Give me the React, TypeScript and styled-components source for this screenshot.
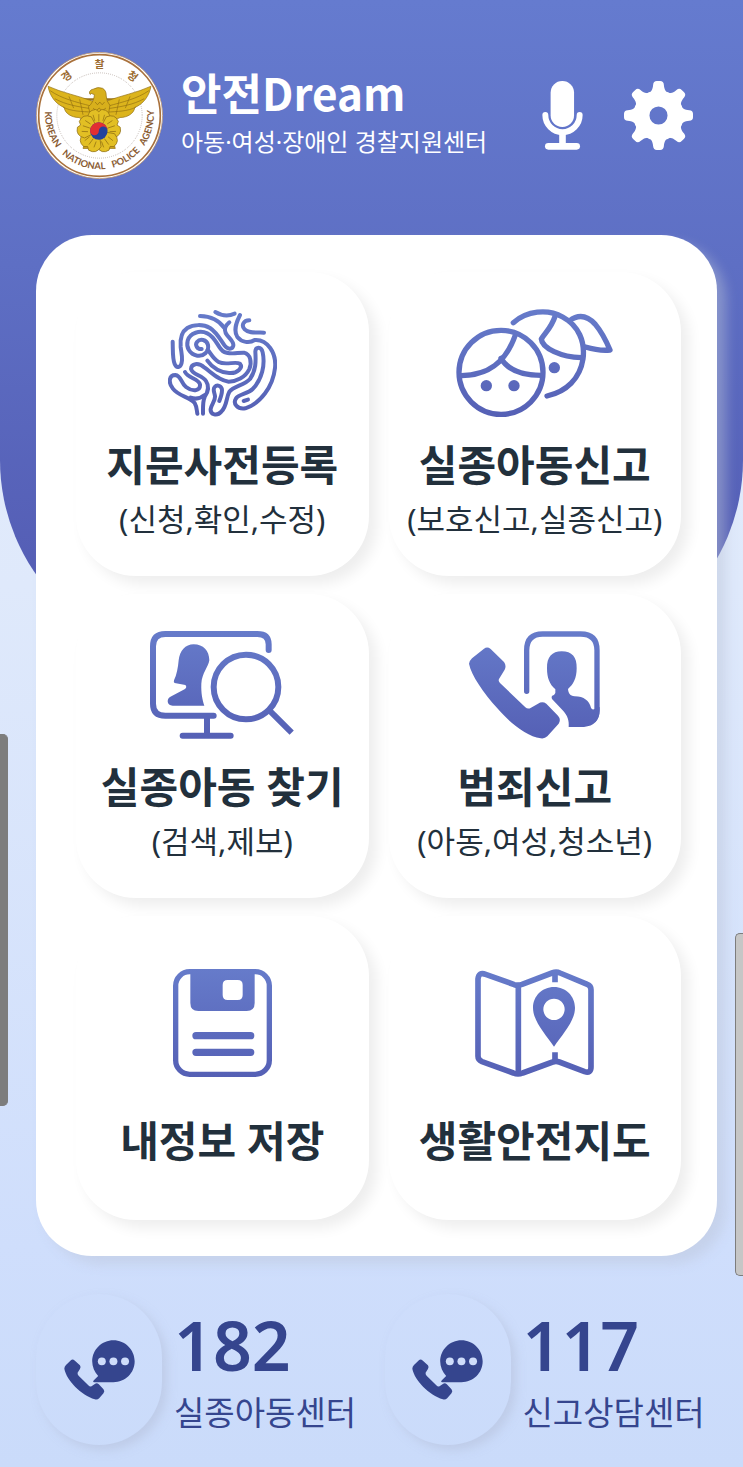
import { useId } from "react";
import type { ReactNode } from "react";
import styled, { createGlobalStyle } from "styled-components";

interface IconProps {
  box: string;
  width: number;
  children: ReactNode;
}

interface Menu {
  title: string;
  sub?: string;
  icon: ReactNode;
}

const GradientIcon = ({ box, width, children }: IconProps) => {
  const id = useId().replace(/[^a-zA-Z0-9]/g, "");
  const [, y, , h] = box.split(" ").map(Number);
  return (
    <TileSvg viewBox={box} $width={width} $paint={`url(#${id})`} aria-hidden="true">
      <defs>
        <linearGradient
          id={id}
          gradientUnits="userSpaceOnUse"
          x1="0"
          y1={y}
          x2="0"
          y2={y + h}
        >
          <stop offset="0" stopColor="#667bca" />
          <stop offset="1" stopColor="#5560b5" />
        </linearGradient>
      </defs>
      {children}
    </TileSvg>
  );
};

const FingerprintIcon = () => (
  <GradientIcon box="54 28 327 324" width={109}>
    <g className="line" strokeWidth="12">
      <path d="M196 37C214 48 236 50 254 42" />
      <path d="M150 49C180 50 206 60 222 84" />
      <path d="M238 68C226 78 221 88 227 100C234 114 252 124 250 138C247 151 232 149 224 138C210 118 200 98 180 85C160 73 130 74 112 85C92 98 90 120 92 142C94 158 97 168 96 182C94 205 80 207 74 193C67 176 69 152 68 126" />
      <path d="M270 46C262 62 248 90 262 112C275 128 298 132 314 121C352 118 380 160 375 205C369 262 330 312 286 326C262 330 249 312 257 298C265 283 292 284 308 268C336 240 346 195 338 158C334 140 317 140 316 156C318 186 318 212 300 238C282 258 252 258 238 276C228 294 232 318 214 336C202 350 180 346 182 328C184 314 196 304 195 290C194 278 187 270 194 262C202 253 216 260 216 272C216 284 212 294 208 304" />
      <path d="M298 62C280 62 273 78 284 89C297 102 320 98 342 99" />
      <path d="M155 148C142 150 134 136 141 127C150 116 170 119 174 136C178 156 160 171 142 168C118 164 108 142 113 123C120 99 150 91 172 101C196 112 202 140 218 154C238 168 262 158 282 159C302 164 306 188 298 208C286 234 258 246 236 246C206 242 186 220 164 204C144 187 124 192 123 208C128 226 156 226 168 244C180 262 172 280 164 292C158 304 159 322 159 342" />
      <path d="M172 183C188 206 214 221 240 220C262 221 280 204 270 192C256 184 226 198 206 187C190 178 184 164 173 150" />
      <path d="M105 217C114 236 146 236 150 254C152 276 126 276 108 262C92 250 94 228 76 226C56 226 55 250 68 266C86 290 120 292 134 310C141 322 140 332 142 342" />
      <path d="M164 286C152 296 138 300 122 294" />
      <path d="M281 304L294 300" />
    </g>
  </GradientIcon>
);

const ChildrenIcon = () => (
  <GradientIcon box="46 28 474 324" width={158}>
    <g className="line" strokeWidth="16">
      <circle cx="181" cy="218" r="126" />
      <path d="M62 228C142 227 195 190 224 106" />
      <path d="M181 176C200 208 238 227 302 227" />
      <path d="M218 69C258 34 320 26 366 52C414 78 434 126 427 178C418 236 378 276 319 289" />
      <path d="M344 48C332 84 318 94 302 118C304 146 362 172 422 174" />
      <path d="M386 64C412 44 438 46 464 74C484 98 496 122 508 151C480 154 458 149 434 142" />
    </g>
    <circle cx="137" cy="258" r="17" />
    <circle cx="220" cy="258" r="17" />
    <circle cx="341" cy="204" r="17" />
  </GradientIcon>
);

const SearchIcon = () => (
  <GradientIcon box="30 34 432 324" width={144}>
    <g className="line" strokeWidth="18">
      <path d="M386 91V74Q386 43 352 43H76Q39 43 39 80V252Q39 288 76 288H221" />
      <path d="M201 290V346M128 348H272" />
      <circle cx="318" cy="202" r="97" />
      <path d="M388 272L455 339" strokeLinecap="butt" />
    </g>
    <path d="M161 74C190 74 208 94 208 122C205 142 186 160 184 192C183 220 187 240 193 258H98C80 258 78 236 94 230L135 208Q142 202 136 196L104 190Q100 188 102 182C110 166 114 144 116 122C119 94 136 74 161 74Z" />
  </GradientIcon>
);

const CrimeIcon = () => (
  <GradientIcon box="27 34 393 324" width={131}>
    <path d="M72 87Q82 80 92 88L132 127Q140 138 134 150L117 178Q114 184 120 190L196 263Q204 270 213 264L234 252Q247 244 259 252L294 288Q304 299 296 312L262 350Q254 358 242 356C200 350 148 308 112 266C70 218 34 168 27 132Q28 124 36 116Z" />
    <path
      className="line"
      strokeWidth="16"
      d="M200 215V92Q200 43 248 43H362Q411 43 411 92V272Q411 290 402 300"
    />
    <path d="M305 95C336 95 351 112 350 146C350 176 340 194 324 208C325 220 330 229 344 230C372 230 388 244 393 264Q396 272 404 268L419 262V272Q417 318 372 322H326C328 302 322 288 310 274L276 238Q272 228 282 226Q288 220 286 209C268 194 261 174 261 146C260 112 276 95 305 95Z" />
  </GradientIcon>
);

const SaveIcon = () => (
  <GradientIcon box="38 42 297 324" width={99}>
    <rect className="line" strokeWidth="16" x="46" y="50" width="281" height="308" rx="42" />
    <path
      fillRule="evenodd"
      d="M90 50H283V144Q283 168 259 168H114Q90 168 90 144ZM202 75Q187 75 187 90V120Q187 135 202 135H232Q247 135 247 120V90Q247 75 232 75Z"
    />
    <path className="line" strokeWidth="22" d="M107 242H271M107 292H271" />
  </GradientIcon>
);

const MapIcon = () => (
  <GradientIcon box="45 42 357 324" width={119}>
    <g className="line" strokeWidth="17">
      <path d="M77 58L163 89Q174 92 186 88L276 54Q289 49 300 54L382 88Q393 92 393 104V336Q393 356 374 350L298 321Q288 317 278 321L188 354Q174 360 160 354L66 320Q54 315 54 304V72Q56 50 77 58Z" />
      <path d="M175 92V354" />
      <path strokeLinecap="butt" d="M285 54V82M285 292V318" />
    </g>
    <path
      fillRule="evenodd"
      d="M282 96C246 96 219 124 219 158C219 198 255 236 282 275C309 236 345 198 345 158C345 124 318 96 282 96ZM282 131A32 32 0 1 1 282 195A32 32 0 1 1 282 131Z"
    />
  </GradientIcon>
);

const feathers = [
  "M190 186C150 170 96 160 56 141C60 168 78 194 104 204C106 222 126 234 148 234C156 240 176 240 200 236Z",
  "M62 154C96 178 140 188 184 200",
  "M76 178C108 196 146 202 186 208",
  "M100 203C126 216 156 216 188 218",
  "M118 171L132 206M150 180L160 226",
];

const ringWords = [
  { word: "KOREAN", offset: "15%" },
  { word: "NATIONAL", offset: "41%" },
  { word: "POLICE", offset: "65%" },
  { word: "AGENCY", offset: "86%" },
];

const Emblem = () => (
  <EmblemSvg viewBox="20 39 378 378" role="img" aria-label="경찰청">
    <defs>
      <path id="emblem-arc" d="M52 186A162 162 0 1 0 366 186" />
    </defs>
    <circle cx="209" cy="228" r="188" fill="#fff" stroke="#b98a5c" strokeWidth="2" />
    <circle cx="209" cy="228" r="181" fill="#fff" stroke="#a9713c" strokeWidth="5" />
    <circle
      cx="209"
      cy="228"
      r="127"
      fill="none"
      stroke="#8c7a70"
      strokeWidth="2"
      strokeDasharray="2 4"
    />
    <g fill="#9a6a2e" fontSize="32" fontWeight="700" textAnchor="middle">
      <text transform="translate(118 120) rotate(-38)">경</text>
      <text x="209" y="87">찰</text>
      <text transform="translate(300 120) rotate(38)">청</text>
    </g>
    <g
      fill="#8a5c34"
      fontFamily="Lato, 'Liberation Sans', sans-serif"
      fontSize="28"
      fontWeight="700"
      textAnchor="middle"
    >
      {ringWords.map(({ word, offset }) => (
        <text key={word}>
          <textPath href="#emblem-arc" startOffset={offset}>
            {word}
          </textPath>
        </text>
      ))}
    </g>
    <path d="M130 180H290" stroke="#9a7420" strokeWidth="6" />
    {[false, true].map((flip) => (
      <g
        key={String(flip)}
        transform={flip ? "translate(418 0) scale(-1 1)" : undefined}
        stroke="#927012"
        strokeWidth="2"
      >
        {feathers.map((d, i) => (
          <path key={d} d={d} fill={i === 0 ? "#dcb41c" : "none"} />
        ))}
      </g>
    ))}
    <path
      d="M179 158Q182 150 192 149Q204 142 218 147Q230 154 229 170Q230 186 240 198L234 234H184L176 202Q192 188 194 166L184 162Q182 168 180 164Z"
      fill="#d8b01c"
      stroke="#8d6c12"
      strokeWidth="2"
    />
    <path
      d="M196 188L203 196L210 188L217 196L224 188M190 206L199 214L208 206L217 214L228 206"
      fill="none"
      stroke="#8d6c12"
      strokeWidth="2"
    />
    <path d="M172 284L160 326H256L244 284Z" fill="#cfa51a" stroke="#8d6c12" strokeWidth="2" />
    {[0, 72, 144, 216, 288].map((angle) => (
      <g key={angle} transform={`rotate(${angle} 207 274)`} stroke="#8d6c12" strokeWidth="2">
        <path
          d="M207 274L174 240Q172 212 198 210L207 217L216 210Q242 212 240 240Z"
          fill="#e2bf24"
        />
        <path d="M207 246V224M195 244L190 226M219 244L224 226" fill="none" />
      </g>
    ))}
    <circle cx="207" cy="274" r="26" fill="#23439c" />
    <path
      d="M181 274A26 26 0 0 1 233 274A13 13 0 0 0 207 274A13 13 0 0 1 181 274Z"
      fill="#e22f32"
    />
  </EmblemSvg>
);

const MicIcon = () => (
  <svg viewBox="38 32 124 209" width="41" height="69" fill="#fff" aria-hidden="true">
    <rect x="64" y="32" width="71" height="139" rx="35" />
    <path
      d="M48 135A52 52 0 0 0 152 135"
      fill="none"
      stroke="#fff"
      strokeWidth="18"
      strokeLinecap="round"
    />
    <rect x="90" y="188" width="20" height="40" />
    <rect x="47" y="220" width="106" height="20" rx="10" />
  </svg>
);

const GearIcon = () => (
  <svg viewBox="-103 -103 206 206" width="69" height="69" fill="#fff" aria-hidden="true">
    <circle r="51" fill="none" stroke="#fff" strokeWidth="48" />
    {[0, 45, 90, 135, 180, 225, 270, 315].map((angle) => (
      <path
        key={angle}
        transform={`rotate(${angle})`}
        d="M-36 -62C-22 -68 -17 -78 -16 -92Q-15 -103 -5 -103H5Q15 -103 16 -92C17 -78 22 -68 36 -62Z"
      />
    ))}
  </svg>
);

const CallIcon = () => (
  <svg viewBox="188 176 214 180" width="71" height="60" fill="#35458e" aria-hidden="true">
    <path d="M208 237Q214 232 220 237L236 252Q240 257 236 263L229 274Q228 279 232 283L262 313Q266 317 271 315L281 308Q287 304 293 309L307 324Q312 330 307 336L294 351Q289 356 281 354C240 342 196 298 189 262Q189 256 194 251Z" />
    <path d="M337 176C372 176 401 204 401 240C401 276 372 303 337 303H278Q273 301 278 297L291 284C280 272 273 257 273 240C273 204 302 176 337 176Z" />
    <g fill="#cfddfb">
      <circle cx="302" cy="240" r="12" />
      <circle cx="337" cy="240" r="12" />
      <circle cx="372" cy="240" r="12" />
    </g>
  </svg>
);

const menus: Menu[] = [
  { title: "지문사전등록", sub: "(신청,확인,수정)", icon: <FingerprintIcon /> },
  { title: "실종아동신고", sub: "(보호신고,실종신고)", icon: <ChildrenIcon /> },
  { title: "실종아동 찾기", sub: "(검색,제보)", icon: <SearchIcon /> },
  { title: "범죄신고", sub: "(아동,여성,청소년)", icon: <CrimeIcon /> },
  { title: "내정보 저장", icon: <SaveIcon /> },
  { title: "생활안전지도", icon: <MapIcon /> },
];

const centers = [
  { tel: "182", name: "실종아동센터" },
  { tel: "117", name: "신고상담센터" },
];

const App = () => {
  return (
    <Page>
      <GlobalStyle />
      <Header>
        <Emblem />
        <Brand>
          <h1>안전Dream</h1>
          <p>아동·여성·장애인 경찰지원센터</p>
        </Brand>
        <HeaderButton aria-label="음성 검색">
          <MicIcon />
        </HeaderButton>
        <HeaderButton aria-label="설정">
          <GearIcon />
        </HeaderButton>
      </Header>

      <Card>
        {menus.map((menu) => (
          <Tile key={menu.title} $single={!menu.sub}>
            {menu.icon}
            <TileTitle>{menu.title}</TileTitle>
            {menu.sub && <TileSub>{menu.sub}</TileSub>}
          </Tile>
        ))}
      </Card>

      <Centers>
        {centers.map((center) => (
          <Center key={center.tel} href={`tel:${center.tel}`}>
            <CallBadge>
              <CallIcon />
            </CallBadge>
            <CenterText>
              <CenterTel>{center.tel}</CenterTel>
              <CenterName>{center.name}</CenterName>
            </CenterText>
          </Center>
        ))}
      </Centers>

      <EdgeHandle $side="left" />
      <EdgeHandle $side="right" />
    </Page>
  );
};

export default App;

const GlobalStyle = createGlobalStyle`
  * {
    box-sizing: border-box;
  }
  body {
    margin: 0;
    font-family: "Noto Sans", "Noto Sans CJK KR", sans-serif;
  }
  h1, p {
    margin: 0;
  }
  button {
    border: none;
    padding: 0;
    font-family: inherit;
    cursor: pointer;
  }
`;

const Page = styled.main`
  position: relative;
  z-index: 0;
  overflow: hidden;
  min-height: 100vh;
  padding: 52px 26px 22px 36px;
  background: linear-gradient(#e6eefc 0%, #dfe9fb 40%, #cfdefc 85%, #cadbfa 100%);

  &::before {
    content: "";
    position: absolute;
    z-index: -1;
    inset: 0 0 auto;
    height: 45%;
    border-radius: 0 0 200px 200px;
    background: linear-gradient(#657bcf, #5e6fc4 40%, #5259b1);
  }
`;

const Header = styled.header`
  display: flex;
  align-items: center;
  padding-right: 24px;
`;

const EmblemSvg = styled.svg`
  width: 127px;
  height: 127px;
  flex-shrink: 0;
`;

const Brand = styled.div`
  flex: 1;
  padding: 0 0 8px 18px;
  color: #fff;
  white-space: nowrap;

  h1 {
    font-family: "Noto Sans CJK KR", sans-serif;
    font-size: 44px;
    font-weight: 700;
    line-height: 56px;
  }
  p {
    margin-top: 4px;
    font-size: 24px;
    line-height: 36px;
  }
`;

const HeaderButton = styled.button`
  display: flex;
  margin-left: 41px;
  background: none;
`;

const Card = styled.section`
  display: grid;
  grid-template-columns: 1fr 1fr;
  gap: 18px 20px;
  margin-top: 56px;
  padding: 37px 36px 36px 40px;
  border-radius: 56px;
  background: #fff;
  box-shadow: 9px 8px 12px rgba(186, 196, 215, 0.45);
`;

const Tile = styled.button<{ $single: boolean }>`
  display: flex;
  flex-direction: column;
  align-items: center;
  gap: ${({ $single }) => ($single ? "34px" : "18px")};
  height: 304px;
  padding-top: ${({ $single }) => ($single ? "53px" : "37px")};
  border-radius: 60px;
  background: #fff;
  color: #22303c;
  white-space: nowrap;
  box-shadow: 8px 8px 14px rgba(0, 0, 0, 0.07);
`;

const TileSvg = styled.svg<{ $width: number; $paint: string }>`
  width: ${({ $width }) => $width}px;
  height: 108px;
  flex-shrink: 0;
  fill: ${({ $paint }) => $paint};

  .line {
    fill: none;
    stroke: ${({ $paint }) => $paint};
    stroke-linecap: round;
    stroke-linejoin: round;
  }
`;

const TileTitle = styled.span`
  font-size: 42px;
  font-weight: 700;
  line-height: 60px;
`;

const TileSub = styled.span`
  margin-top: -16px;
  font-size: 31px;
  line-height: 44px;
`;

const Centers = styled.nav`
  display: grid;
  grid-template-columns: 1fr 1fr;
  gap: 16px;
  margin-top: 38px;
`;

const Center = styled.a`
  display: flex;
  align-items: center;
  gap: 12px;
  color: #35458e;
  text-decoration: none;
  white-space: nowrap;
`;

const CallBadge = styled.span`
  display: flex;
  align-items: center;
  justify-content: center;
  width: 126px;
  height: 151px;
  flex-shrink: 0;
  border-radius: 63px;
  box-shadow: 5px 5px 10px rgba(180, 190, 215, 0.5);
`;

const CenterText = styled.span`
  padding-top: 6px;
`;

const CenterTel = styled.strong`
  display: block;
  font-size: 68px;
  font-weight: 600;
  line-height: 80px;
`;

const CenterName = styled.span`
  display: block;
  font-size: 33px;
  line-height: 56px;
`;

const EdgeHandle = styled.i<{ $side: "left" | "right" }>`
  position: absolute;
  ${({ $side }) => $side}: 0;
  top: ${({ $side }) => ($side === "left" ? "734px" : "933px")};
  width: 8px;
  height: ${({ $side }) => ($side === "left" ? "372px" : "343px")};
  border: 1px solid #7d7d7d;
  border-${({ $side }) => $side}: none;
  border-radius: ${({ $side }) => ($side === "left" ? "0 5px 5px 0" : "5px 0 0 5px")};
  background: ${({ $side }) => ($side === "left" ? "#7d7d7d" : "#c6c6c6")};
`;
